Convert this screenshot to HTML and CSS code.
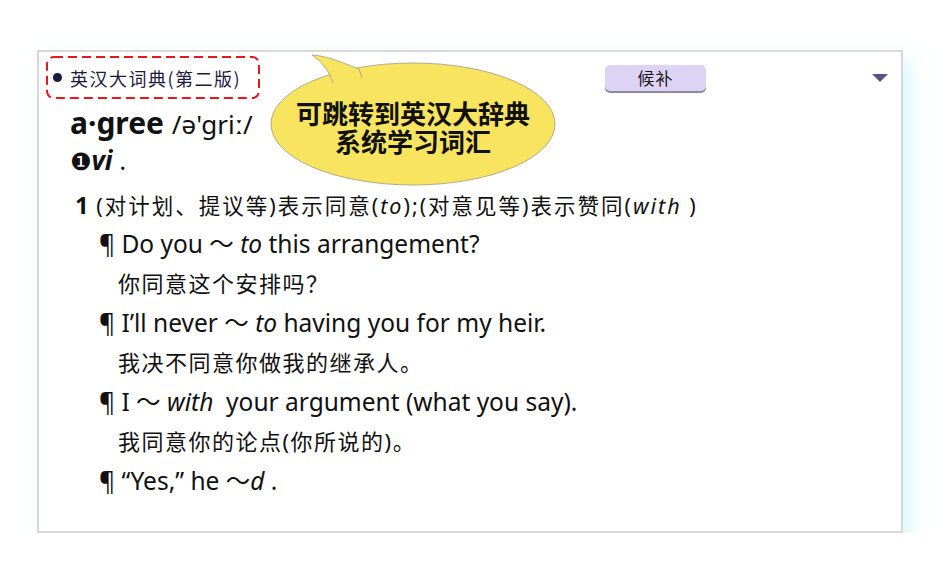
FILE: index.html
```html
<!DOCTYPE html>
<html lang="zh-CN">
    <head>
        <meta charset="UTF-8">
        <meta name="viewport" content="width=device-width, initial-scale=1.0">
        <title>英汉大词典 - agree</title>
        <link rel="stylesheet" href="styles.css">
    </head>
    <body>
        <main class="card">
            <header class="head">
                <div class="source">
                    <svg class="frame" width="214" height="43" viewBox="0 0 214 43">
                        <rect x="1" y="1" width="212" height="41" rx="7" fill="none" stroke="#e8161e" stroke-width="2" stroke-dasharray="9 5"/>
                    </svg>
                    <span class="dot"></span>
                    <span>英汉大词典(第二版)</span>
                </div>
                <button class="alt">候补</button>
                <span class="toggle"></span>
            </header>

            <section class="entry">
                <h1 class="word">a·gree <span class="phon">/ə'griː/</span></h1>
                <p class="pos"><span class="num">❶</span><b><i>vi</i></b> .</p>
                <p class="def"><b>1</b> (对计划、提议等)表示同意(<i>to</i>);(对意见等)表示赞同(<i>with</i> )</p>
                <ul class="examples">
                    <li class="ex">¶ Do you ～ <i>to</i> this arrangement?</li>
                    <li class="tr">你同意这个安排吗？</li>
                    <li class="ex">¶ I’ll never ～ <i>to</i> having you for my heir.</li>
                    <li class="tr">我决不同意你做我的继承人。</li>
                    <li class="ex">¶ I ～ <i>with</i>&nbsp; your argument (what you say).</li>
                    <li class="tr">我同意你的论点(你所说的)。</li>
                    <li class="ex">¶ “Yes,” he ～<i>d</i> .</li>
                </ul>
            </section>

            <!-- 提示气泡 -->
            <div class="bubble">
                <svg width="290" height="136" viewBox="0 0 290 136">
                    <ellipse cx="144" cy="72" rx="142" ry="61" fill="#f8e45e" stroke="#b3ab8c" stroke-width="1"/>
                    <path d="M64 31 C60 18, 52 9, 43 3 C58 4, 72 10, 90 17 L93 26" fill="#f8e45e" stroke="#b3ab8c" stroke-width="1"/>
                </svg>
                <p class="bubble-text">可跳转到英汉大辞典<br>系统学习词汇</p>
            </div>
        </main>
    </body>
</html>
```

FILE: styles.css
```css
:root{
    --ink: #111;
    --label: #1c1a3c;
    --border: #d7d7dc;
}
body{
    margin: 0;
    padding: 0;
    background: #fff;
    color: var(--ink);
    font-family: "Noto Sans", "Noto Sans CJK SC", sans-serif;
}

.card{
    position: relative;
    box-sizing: border-box;
    width: 866px;
    height: 483px;
    margin: 50px 0 0 37px;
    padding: 4px 13px 0 7px;
    border: 2px solid var(--border);
    background: #fff;
    box-shadow: 8px 10px 18px rgba(190, 240, 252, 0.55);
}

.head{
    display: flex;
    align-items: center;
    height: 43px;
}
.source{
    position: relative;
    box-sizing: border-box;
    display: flex;
    align-items: center;
    gap: 8px;
    width: 214px;
    height: 43px;
    padding-left: 7px;
    color: var(--label);
    font-family: "Noto Sans CJK SC", sans-serif;
    font-size: 18px;
    letter-spacing: 1.5px;

    .frame{
        position: absolute;
        inset: 0;
    }
    .dot{
        width: 9px;
        height: 9px;
        border-radius: 50%;
        background: var(--label);
    }
}
.alt{
    width: 101px;
    height: 26px;
    margin-left: 345px;
    padding: 0;
    border: none;
    border-radius: 5px;
    background: #ddd3f5;
    box-shadow: 0 2px 0 #8e8c9c;
    color: #1a1a1a;
    font-family: "Noto Sans CJK SC", sans-serif;
    font-size: 17px;
    letter-spacing: 1px;
    line-height: 26px;
}
.toggle{
    margin-left: auto;
    width: 0;
    height: 0;
    border-left: 8px solid transparent;
    border-right: 8px solid transparent;
    border-top: 8px solid #5b4f86;
}

.entry{
    padding-left: 24px;

    p, h1, ul{
        margin: 0;
    }
}
.word{
    height: 40px;
    margin-top: 4px !important;
    font-size: 30px;
    line-height: 40px;
    font-weight: 700;

    .phon{
        font-size: 26px;
        font-weight: 400;
    }
}
.pos{
    height: 34px;
    font-size: 26px;
    line-height: 34px;

    .num{
        font-family: "DejaVu Sans", sans-serif;
        font-size: 24px;
    }
}
.def{
    height: 38px;
    margin-top: 9px !important;
    padding-left: 5px;
    font-size: 21.5px;
    letter-spacing: 2px;
    line-height: 38px;
    white-space: nowrap;

    b{
        font-size: 24px;
        letter-spacing: 0;
    }
}
.examples{
    list-style: none;
    padding: 0;
    font-size: 24.5px;
    line-height: 39.5px;

    li{
        height: 39.5px;
        white-space: nowrap;
    }
    .ex{
        padding-left: 29px;
    }
    .tr{
        padding-left: 48px;
        font-size: 22px;
        letter-spacing: 1.5px;
    }
}

.bubble{
    position: absolute;
    left: 230px;
    top: 0;
    width: 290px;
    height: 136px;

    svg{
        position: absolute;
        inset: 0;
    }
}
.bubble-text{
    position: absolute;
    left: 2px;
    top: 47px;
    width: 284px;
    margin: 0;
    text-align: center;
    font-family: "Noto Sans CJK SC", sans-serif;
    font-weight: 700;
    font-size: 26px;
    line-height: 28px;
    color: #111;
}
```
